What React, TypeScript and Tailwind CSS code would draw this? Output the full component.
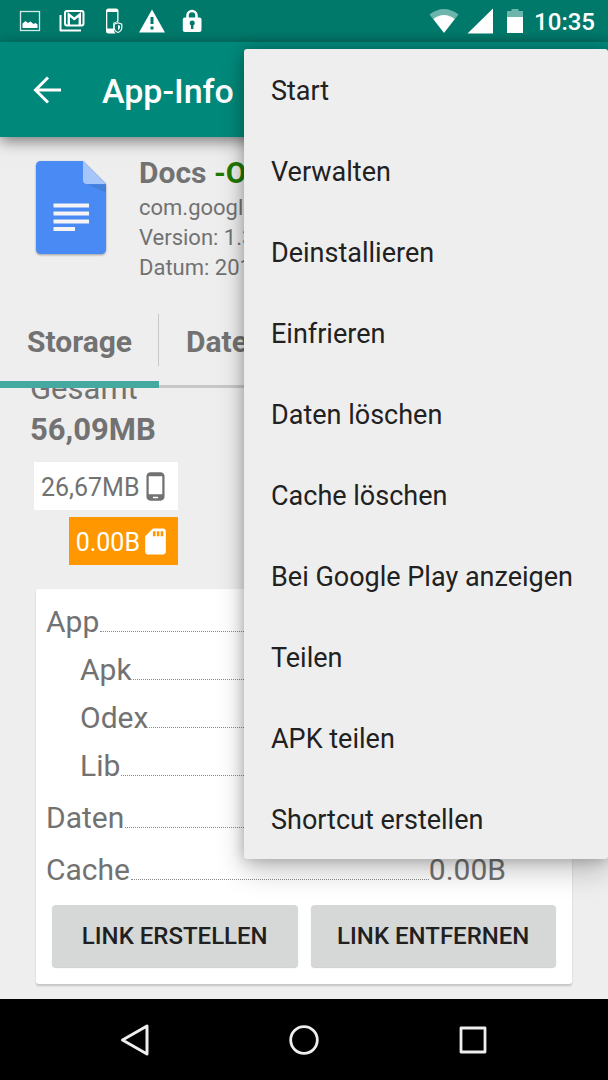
const menuItems = [
  'Start',
  'Verwalten',
  'Deinstallieren',
  'Einfrieren',
  'Daten löschen',
  'Cache löschen',
  'Bei Google Play anzeigen',
  'Teilen',
  'APK teilen',
  'Shortcut erstellen',
];

type UsageRow = { label: string; value?: string; nested?: boolean };

const usageRows: UsageRow[] = [
  { label: 'App' },
  { label: 'Apk', nested: true },
  { label: 'Odex', nested: true },
  { label: 'Lib', nested: true },
  { label: 'Daten' },
  { label: 'Cache', value: '0.00B' },
];

function StatusBar() {
  return (
    <div className="flex h-[42px] shrink-0 items-center justify-between bg-[#00796b] pr-[13px] pl-2.5 text-white">
      <div className="flex items-center">
        <span className="flex w-10 justify-center">
          <svg width="22" height="22" viewBox="0 0 22 22" aria-hidden="true">
            <rect x="1.500" y="1.500" width="19" height="19" fill="none" stroke="#d3ebe8" strokeWidth="1.300" />
            <path d="M3.500 18v-4.500l3-2.500 2.500 2 2.500-1.500 3 2.500 2-1 2 1.500V18z" fill="#fff" />
          </svg>
        </span>
        <span className="flex w-11 justify-center">
          <svg width="26" height="24" viewBox="0 0 26 24" aria-hidden="true">
            <path d="M1.500 6v15.500H22" fill="none" stroke="#fff" strokeWidth="2" strokeLinejoin="round" />
            <rect x="6" y="2" width="18.500" height="14.500" rx="2" fill="none" stroke="#fff" strokeWidth="2" />
            <path d="M9.800 16V5.500l5.500 4.500 5.500-4.500V16" fill="none" stroke="#fff" strokeWidth="2.400" />
          </svg>
        </span>
        <span className="flex w-[38px] justify-center">
          <svg width="20" height="26" viewBox="0 0 20 26" aria-hidden="true">
            <path
              d="M5.500.5h7.500Q15.500 .5 15.500 3v10.500l-4.500 1.700v6c0 2 .7 3.400 1.800 4.300H5.500Q3 25.500 3 23V3Q3 .5 5.500.5zM4.300 4v16.500h6v-5.700l3.900-1.600V4z"
              fill="#fff"
              fillRule="evenodd"
            />
            <path d="M15 14.800l3.800 1.300v3.400q0 3.500-3.800 5-3.800-1.500-3.800-5v-3.400z" fill="#00796b" stroke="#fff" strokeWidth="1.200" />
            <path d="M15 17v5.300q2-1 2-3.300v-1.300z" fill="#fff" />
          </svg>
        </span>
        <span className="flex w-10 justify-center">
          <svg width="26" height="24" viewBox="0 0 26 24" aria-hidden="true">
            <path d="M13 0.500L26 23.500H0zM11.500 8v7h3V8zM11.500 17.500v3h3v-3z" fill="#fff" fillRule="evenodd" />
          </svg>
        </span>
        <span className="flex w-10 justify-center">
          <svg width="20" height="24" viewBox="0 0 20 24" aria-hidden="true">
            <path d="M5.500 10V6.500a4.500 4.500 0 0 1 9 0V10" fill="none" stroke="#fff" strokeWidth="2.600" />
            <rect x="0.800" y="8.500" width="18.700" height="14.500" rx="2" fill="#fff" />
            <circle cx="10.200" cy="14" r="2.500" fill="#00796b" />
            <path d="M9 14.500h2.400V20H9z" fill="#00796b" />
          </svg>
        </span>
      </div>
      <div className="flex items-center">
        <svg className="mr-2" width="30" height="26" viewBox="0 0 30 26" aria-hidden="true">
          <path d="M0.500 6.500Q15-4.500 29.500 6.500L15 25z" fill="#6bb5ac" />
          <path d="M4.300 11Q15 3 25.700 11L15 24.800z" fill="#fff" />
        </svg>
        <svg className="mr-3.5" width="26" height="26" viewBox="0 0 26 26" aria-hidden="true">
          <path d="M26 0.500V25.500H0.500z" fill="#fff" />
        </svg>
        <svg className="mr-[11px]" width="16" height="26" viewBox="0 0 16 26" aria-hidden="true">
          <path d="M4.500 1h7v2H16v7H0V3h4.500z" fill="#6bb5ac" />
          <path d="M0 9h16v16H0z" fill="#fff" />
        </svg>
        <span className="pt-0.5 text-2xl leading-none font-medium">10:35</span>
      </div>
    </div>
  );
}

function DocsIcon() {
  return (
    <svg
      className="mt-2 shrink-0 drop-shadow-[0_1px_1px_rgba(0,0,0,0.35)]"
      width="70"
      height="94"
      viewBox="0 0 70 94"
      role="img"
      aria-label="Docs"
    >
      <path d="M5 0h42l23 23v65q0 5-5 5H5q-5 0-5-5V5q0-5 5-5z" fill="#4a8af4" />
      <path d="M52 23.500h18v8z" fill="#447fd8" />
      <path d="M47 0l23 23H51q-4 0-4-4z" fill="#a6c5fa" />
      <path d="M17.500 42.500H53v4H17.500zM17.500 50.500H53v4H17.500zM17.500 58.500H53v4H17.500zM17.500 66H39v4H17.500z" fill="#f4f4f4" />
    </svg>
  );
}

function UsageLine({ label, value, nested }: UsageRow) {
  return (
    <div
      className={
        nested
          ? 'flex items-baseline pr-[66px] pl-11 leading-[48px]'
          : 'mt-1 flex items-baseline pr-[66px] pl-2.5 leading-[48px]'
      }
    >
      <dt>{label}</dt>
      <span className="-mb-[3px] ml-px flex-1 border-b border-dotted border-[#8a8a8a]" />
      <dd>{value}</dd>
    </div>
  );
}

export default function App() {
  return (
    <div className="relative flex h-screen flex-col overflow-hidden bg-[#eeeeee] font-[Roboto,sans-serif] text-[#727272]">
      <StatusBar />
      <header className="relative flex h-[95px] shrink-0 items-center bg-[#00897b] pl-8 text-white shadow-[0_4px_14px_rgba(0,0,0,0.5)]">
        <button type="button" aria-label="Zurück" className="mr-[38px]">
          <svg width="32" height="32" viewBox="0 0 32 32" fill="none" stroke="#fff" strokeWidth="3" aria-hidden="true">
            <path d="M29 16H4.500M16 3.500L3.500 16 16 28.500" />
          </svg>
        </button>
        <h1 className="pt-0.5 text-[34px] leading-none font-medium">App-Info</h1>
      </header>

      <section className="flex shrink-0 gap-[33px] px-9 pt-4 pb-3">
        <DocsIcon />
        <div className="text-[22px] leading-[30px]">
          <h2 className="text-[30px] leading-10 font-bold">
            Docs <span className="text-[#1f7a00]">-O</span>
          </h2>
          <p>com.google</p>
          <p>Version: 1.3</p>
          <p>Datum: 201</p>
        </div>
      </section>

      <nav className="flex h-[93px] shrink-0 items-stretch text-[30px] font-bold shadow-[inset_0_-3px_0_#c8c8c8]">
        <button type="button" className="flex items-center border-b-[7px] border-[#46a99f] pt-1 pl-[27px]">
          <span className="pt-0.5">Storage</span>
          <span className="ml-[26px] h-[52px] w-px bg-[#c8c8c8]" />
        </button>
        <button type="button" className="flex items-center border-b-[7px] border-transparent px-[27px] pt-1">
          <span className="pt-0.5">Daten</span>
        </button>
      </nav>

      <main className="min-h-0 flex-1 overflow-hidden">
        <div className="-mt-5 pb-4">
          <div className="px-[30px] text-[31px] leading-[41px]">
            <p>Gesamt</p>
            <p className="font-bold">56,09MB</p>
          </div>
          <div className="mt-3 ml-[34px] flex w-36 flex-col items-end gap-[7px] text-[25px]">
            <div className="flex h-12 w-full items-center justify-between bg-white px-[7px]">
              <span className="pt-1">26,67MB</span>
              <svg className="shrink-0" width="31" height="31" viewBox="0 0 24 24" fill="currentColor" aria-hidden="true">
                <path d="M16 1H8C6.340 1 5 2.340 5 4v16c0 1.660 1.340 3 3 3h8c1.660 0 3-1.340 3-3V4c0-1.660-1.340-3-3-3zm-2 20h-4v-1h4v1zm3.250-3H6.750V4h10.500v14z" />
              </svg>
            </div>
            <div className="flex h-12 items-center bg-[#ff9800] px-[7px] text-white">
              <span className="pt-1">0.00B</span>
              <svg className="shrink-0" width="31" height="31" viewBox="0 0 24 24" fill="currentColor" aria-hidden="true">
                <path d="M18 2h-8L4.020 8 4 20c0 1.100.9 2 2 2h12c1.100 0 2-.9 2-2V4c0-1.100-.9-2-2-2zm-6 6h-2V4h2v4zm3 0h-2V4h2v4zm3 0h-2V4h2v4z" />
              </svg>
            </div>
          </div>

          <section className="mx-9 mt-6 rounded-[3px] bg-white pt-[5px] pb-[17px] shadow-[0_2px_2px_rgba(0,0,0,0.18)]">
            <dl className="text-[30px]">
              {usageRows.map((row) => (
                <UsageLine key={row.label} {...row} />
              ))}
            </dl>
            <div className="mt-[11px] grid grid-cols-2 gap-[13px] px-4 text-2xl font-medium text-[#202020]">
              <button type="button" className="h-[62px] rounded bg-[#d6d7d7] shadow-[0_1px_1px_rgba(0,0,0,0.2)]">
                LINK ERSTELLEN
              </button>
              <button type="button" className="h-[62px] rounded bg-[#d6d7d7] shadow-[0_1px_1px_rgba(0,0,0,0.2)]">
                LINK ENTFERNEN
              </button>
            </div>
          </section>
        </div>
      </main>

      <footer className="z-20 flex h-[81px] shrink-0 items-center justify-center bg-black">
        <button type="button" aria-label="Zurück" className="flex w-[169px] justify-center">
          <svg width="32" height="34" viewBox="0 0 32 34" fill="none" stroke="#eee" strokeWidth="3" strokeLinejoin="round" aria-hidden="true">
            <path d="M28 3v28L3.500 17z" />
          </svg>
        </button>
        <button type="button" aria-label="Startseite" className="flex w-[169px] justify-center">
          <svg width="32" height="32" viewBox="0 0 32 32" fill="none" stroke="#eee" strokeWidth="2.800" aria-hidden="true">
            <circle cx="16" cy="16" r="13.300" />
          </svg>
        </button>
        <button type="button" aria-label="Übersicht" className="flex w-[169px] justify-center">
          <svg width="28" height="28" viewBox="0 0 28 28" fill="none" stroke="#eee" strokeWidth="2.800" strokeLinejoin="round" aria-hidden="true">
            <rect x="2" y="2" width="24" height="24" />
          </svg>
        </button>
      </footer>

      <div
        role="menu"
        className="absolute top-[49px] right-0 z-10 flex w-[364px] flex-col rounded-[3px] bg-[#eeeeee] text-[27px] text-[#212121] shadow-[0_12px_28px_rgba(0,0,0,0.22),0_0_14px_rgba(0,0,0,0.25)]"
      >
        {menuItems.map((item) => (
          <button key={item} type="button" role="menuitem" className="h-[81px] px-[27px] pt-1 text-left">
            {item}
          </button>
        ))}
      </div>
    </div>
  );
}
